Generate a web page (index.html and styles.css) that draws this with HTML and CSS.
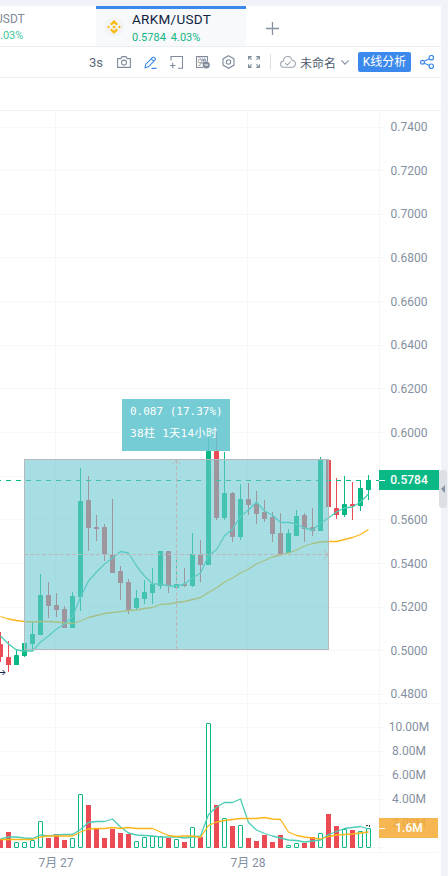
FILE: index.html
```html
<!DOCTYPE html>
<html lang="zh-CN">
<head>
    <meta charset="utf-8">
    <title>ARKM/USDT</title>
    <link rel="stylesheet" href="styles.css">
</head>
<body>
    <div class="app">
        <header class="tabs">
            <div class="tab tab-prev">
                <div class="pair">USDT</div>
                <div class="quote">.03%</div>
            </div>
            <div class="tab active">
                <span class="coin">
                    <svg width="14" height="14" viewBox="0 0 14 14" fill="#fbb80f">
                        <path d="M7 0l4 4-1.6 1.6L7 3.2 4.6 5.6 3 4zM7 14l4-4-1.6-1.6L7 10.800 4.600 8.400 3 10zM1.500 5.500L3 7 1.500 8.500 0 7zM12.500 5.500L14 7l-1.500 1.500L11 7zM7 5.300L8.700 7 7 8.700 5.300 7z"/>
                    </svg>
                </span>
                <div>
                    <div class="pair">ARKM/USDT</div>
                    <div class="quote"><span>0.5784</span><span>4.03%</span></div>
                </div>
            </div>
            <div class="add">
                <svg width="13" height="13" viewBox="0 0 13 13" stroke="#8591a3" stroke-width="1.3"><path d="M6.500 0v13M0 6.500h13"/></svg>
            </div>
        </header>

        <nav class="toolbar">
            <span class="period">3s</span>
            <svg class="ico camera" width="14" height="12" viewBox="0 0 14 12"><path d="M.6 2.600h3.200L5 .6h4l1.200 2h3.200v8.800H.6z"/><circle cx="7" cy="6.600" r="2.500"/></svg>
            <svg class="ico pen" width="13" height="13" viewBox="0 0 13 13"><path d="M1 11.800l.8-3.600L8.600 1.300q.8-.7 1.600 0l1 1q.7.8 0 1.600L4.400 10.800zM7.200 2.800l2.600 2.600M7.500 12.400h5"/></svg>
            <svg class="ico box" width="13" height="13" viewBox="0 0 13 13"><path d="M1 4.500v-4h11.500v11.700H8M0 9.500h5.500M2.700 6.700v5.500"/></svg>
            <svg class="ico pattern" width="14" height="13" viewBox="0 0 14 13"><path d="M7 11.500H.5V.5h11v5"/><text x="1.600" y="9" font-size="9">弹</text><circle cx="10.300" cy="9" r="3.500" fill="#7f8b9b" stroke="none"/><path d="M8.500 9h3.600" stroke="#fff"/></svg>
            <svg class="ico hex" width="13" height="14" viewBox="0 0 13 14"><path d="M6.500.7l5.500 3.200v6.200l-5.500 3.200L1 10.100V3.900z"/><circle cx="6.500" cy="7" r="2.200"/></svg>
            <svg class="ico full" width="12" height="12" viewBox="0 0 12 12"><path d="M.6 3.800V.6h3.200M.6.6l3 3M8.200.6h3.200v3.200M11.400.6l-3 3M.6 8.200v3.200h3.200M.6 11.400l3-3M11.400 8.200v3.200H8.200M11.400 11.400l-3-3"/></svg>
            <span class="sep"></span>
            <svg class="ico cloud" width="16" height="12" viewBox="0 0 16 12"><path d="M4 11.300C-.5 11.300-.4 5.200 3.500 5 4-.6 10.800-1 12 4.200c4.600.3 4.500 7.100-.2 7.100zM5.300 7.200l2 1.900 3.400-3.500"/></svg>
            <span class="name">未命名</span>
            <svg class="ico arrow" width="8" height="5" viewBox="0 0 8 5"><path d="M.4.4L4 4.200 7.600.4"/></svg>
            <button class="analyse">K线分析</button>
            <svg class="ico share" width="14" height="14" viewBox="0 0 14 14"><circle cx="2.500" cy="7.300" r="1.900"/><circle cx="11.300" cy="2.700" r="2.200"/><circle cx="11.300" cy="11.200" r="2.200"/><path d="M4.300 6.300l5-2.600M4.300 8.200l5 2.300"/></svg>
        </nav>

        <main class="chart">
            <svg id="plot" width="441" height="798" viewBox="0 78 441 798"></svg>
            <div class="tip">
                <div>0.087 (17.37%)</div>
                <div class="bars">38柱 1天14小时</div>
            </div>
        </main>
    </div>
    <div class="handle"></div>

    <script src="chart.js"></script>
</body>
</html>
```

FILE: styles.css
```css
body {
    margin: 0;
    background: #f1f3f8;
    font-family: Roboto, "Noto Sans CJK SC", sans-serif;
    height: 876px;
    overflow: hidden;
    position: relative;
}

.app {
    width: 441px;
    padding-top: 6px;
}

.tabs {
    display: flex;
    height: 40px;
    background: #fff;
    border-bottom: 1px solid #eceef2;
}

.tab {
    box-sizing: border-box;
    width: 150px;
    border-top: 3px solid #3b89ed;
    background: #f7f9fb;
    display: flex;
    padding-left: 8px;
}

.tab-prev {
    width: 96px;
    display: block;
    background: #fff;
    border-top-color: #fff;
    padding: 0;
}

.pair {
    font-size: 13.5px;
    line-height: 15px;
    margin-top: 3px;
    color: #10233f;
    letter-spacing: .3px;
}

.quote {
    font-size: 11px;
    line-height: 14px;
    margin-top: 4px;
    color: #10b583;
    display: flex;
    gap: 5px;
}

.tab-prev .pair {
    color: #7f8998;
    font-size: 12px;
    letter-spacing: 0;
    margin-left: -5px;
}

.tab-prev .quote {
    color: #3fc79c;
    margin-top: 2px;
}

.coin {
    width: 20px;
    height: 20px;
    margin: 8px 8px 0 0;
    border-radius: 50%;
    background: #f2f4f5;
    display: flex;
    align-items: center;
    justify-content: center;
}

.add {
    padding: 14px 0 0 20px;
}

.toolbar {
    box-sizing: border-box;
    height: 31px;
    background: #fff;
    border-bottom: 1px solid #eceef2;
    display: flex;
    align-items: center;
    padding-left: 89px;
}

.toolbar > * {
    flex: none;
}

.period {
    width: 28px;
    font-size: 13px;
    color: #5d697b;
}

.ico {
    fill: none;
    stroke: #7f8b9b;
    stroke-width: 1.1;
}

.ico text {
    fill: #7f8b9b;
    stroke: none;
}

.camera { margin-right: 13px; }
.pen { margin-right: 13px; stroke: #3b89ed; }
.box { margin-right: 13px; }
.pattern { margin-right: 12px; }
.hex { margin-right: 13px; }
.full { margin-right: 10px; }
.cloud { margin-right: 4px; stroke: #9aa4b1; }
.arrow { margin-right: 9px; stroke: #8591a3; }
.share { stroke: #3b89ed; stroke-width: 1.2; }

.sep {
    width: 1px;
    height: 16px;
    margin-right: 9px;
    background: #dcdfe5;
}

.name {
    width: 41px;
    font-size: 12px;
    color: #4c596c;
    white-space: nowrap;
}

.analyse {
    width: 53px;
    height: 20px;
    margin-right: 9px;
    padding: 0;
    border: none;
    border-radius: 2px;
    background: #3b89ed;
    color: #fff;
    font: 12px/20px Roboto, "Noto Sans CJK SC", sans-serif;
    white-space: nowrap;
}

.chart {
    height: 798px;
    background: #fff;
    position: relative;
}

.chart svg {
    display: block;
}

/* label of the measured range */
.tip {
    position: absolute;
    left: 122px;
    top: 321px;
    box-sizing: border-box;
    width: 108px;
    height: 52px;
    padding: 2px 0 0 8px;
    background: rgba(98, 197, 207, .88);
    color: #fff;
    font: 11px/22px "DejaVu Sans Mono", "Noto Sans CJK SC", monospace;
    white-space: nowrap;
}

.bars {
    letter-spacing: .35px;
}

.axis {
    font-size: 12px;
    fill: #8490a1;
}

.grid {
    stroke: #f7f7f8;
}

.frame {
    stroke: #eff0f3;
}

.up { fill: #0ab885; }
.down { fill: #ea4b55; }

.vol-up {
    fill: #fff;
    stroke: #0ab885;
}

.line {
    fill: none;
    stroke-width: 1.3;
    stroke-linejoin: round;
}

.fast { stroke: #4bcdb6; }
.slow { stroke: #fcb61a; }

.handle {
    position: absolute;
    left: 439px;
    top: 470px;
    width: 8px;
    height: 38px;
    border-radius: 3px;
    background: #dce0e5;
}

.handle::after {
    content: "";
    position: absolute;
    left: 2px;
    top: 15px;
    border: 4px solid transparent;
    border-left: 0;
    border-right-color: #8793a2;
}
```

FILE: chart.js
```js
const plot = document.getElementById('plot');

// high, body top, body bottom, low, volume top, 1 = up
const candles = [
    [632,644,657,662,839,0], [641,657,665,672,832,0], [649,655,665,665,842,1], [643,643,656,657,842,1],
    [621,634,644,651,840,1], [574,595,635,635,821,1], [582,595,606,618,838,0], [593,605,610,617,834,0],
    [606,609,628,628,840,0], [592,596,628,628,838,1], [468,501,597,611,794,1], [476,500,528,551,805,0],
    [515,527,529,541,829,0], [524,527,555,561,838,0], [499,555,573,573,829,0], [566,571,583,600,833,0],
    [579,582,610,614,834,0], [590,598,608,610,841,1], [580,592,599,604,837,1], [568,584,593,604,836,1],
    [551,551,586,589,836,1], [551,551,586,593,838,0], [559,584,588,588,839,1], [568,584,586,587,842,0],
    [533,554,586,587,827,1], [540,554,565,582,837,0], [438,451,565,565,723,1], [433,451,518,520,805,0],
    [452,493,518,520,818,1], [492,493,537,542,826,0], [484,499,537,540,825,1], [483,499,505,515,838,0],
    [491,504,514,524,841,0], [500,512,519,522,835,0], [512,517,534,542,842,0], [513,533,554,554,835,0],
    [529,533,553,553,845,1], [510,516,536,536,843,1], [513,515,529,542,843,0], [508,527,531,536,837,0],
    [457,460,531,531,833,1], [460,460,507,507,814,0], [478,508,515,519,826,0], [476,504,515,517,829,1],
    [482,504,506,520,830,0], [480,488,506,511,831,1], [475,480,490,500,828,1]
];

const maFast = [636,644,650,651,651,642,636,629,624,617,597,581,572,564,558,551.5,553,566,576,584,584,586,586,584,578,573,556,549.5,536,529,516.5,510,502,511,515,522.5,522.5,524,528,530,523,518,512,508,507,502,494];
const maSlow = [616.5,619,620.5,621.5,622,621.5,621.5,622,623,623.5,621,617.5,615.5,613.5,612.5,611.7,610.5,610,608.5,607.5,604.5,604,602.5,601.5,599.5,597.5,592.5,588,582,578,573,569,564,560.5,557,555,553,550,546,543.5,542,541.5,541.5,539.5,537.5,534.5,529.5];
const volFast = [839,837,837,838,838.5,835,836,835,834.5,834.5,829.5,822.5,821.5,821.5,819,827,833,835,835.5,836,837,837,837,838,837,836,814.5,807,802.5,802.5,799,822.5,830,833.5,836,838,840,840.5,842,841,840,834.5,831.5,828.5,827.5,826.5,829];
const volSlow = [839.5,839.5,839.5,839.5,839.5,837,836,836,836,836,832,829,828.5,828.5,827.5,828.5,827.5,828.5,828.5,828.5,832,835.5,836.5,836,836,837.5,825.5,822,820.5,819.5,818.5,818.5,818.5,817.5,819,819.5,832,835.5,837,838,839,836.5,835,834.5,834,833,832];

let out = '';

function rect(x, y, w, h, cls) {
    out += `<rect x="${x}" y="${y}" width="${w}" height="${h}" class="${cls}"/>`;
}

function line(values, cls) {
    const points = values.map((y, i) => `${i * 8 + 0.5},${y}`).join(' ');
    out += `<polyline class="line ${cls}" points="${points}"/>`;
}

function text(x, y, s, cls) {
    out += `<text x="${x}" y="${y}" text-anchor="middle" class="${cls}">${s}</text>`;
}

// grid
let grid = 'M55.5 112V852M247.5 112V852M379.5 112V852M0 703.5H438M0 852.5H438';
for (let i = 0; i < 14; i++) grid += `M0 ${Math.floor(127 + i * 43.65) + 0.5}H385`;
for (let i = 0; i < 6; i++) grid += `M0 ${727.5 + i * 24}H385`;
out += `<path class="grid" d="${grid}"/>`;
out += '<path class="frame" d="M0 110.5H441"/>';

// volume
candles.forEach((c, i) => {
    const x = i * 8 - 2;
    if (c[5]) out += `<rect x="${x + 0.5}" y="${c[4] + 0.5}" width="4" height="${847 - c[4]}" rx=".5" class="vol-up"/>`;
    else rect(x, c[4], 5, 848 - c[4], 'down');
});
line(volFast, 'fast');
line(volSlow, 'slow');

// price
candles.forEach((c, i) => {
    const cls = c[5] ? 'up' : 'down';
    rect(i * 8, c[0], 1, c[3] - c[0], cls);
    out += `<rect x="${i * 8 - 2}" y="${c[1]}" width="5" height="${c[2] - c[1]}" rx=".5" class="${cls}"/>`;
});
line(maSlow, 'slow');
line(maFast, 'fast');
out += '<path d="M-4 480.5H379" stroke="#0ab885" stroke-dasharray="5 5"/>';

// measured range
out += '<rect x="24.5" y="459.500" width="304" height="190" fill="#6ac8d1" fill-opacity=".6" stroke="#b5b9bb"/>';
out += '<path d="M24 554.5H328M176.500 650V460" stroke="#bcb8ba" stroke-dasharray="4 2" fill="none"/>';
out += '<path d="M324 550l4 4.500-4 4.500M172.500 464l4-4 4 4" stroke="#bcb8ba" fill="none"/>';
out += '<path d="M0 672.500h5M2.500 670l2.500 2.500-2.500 2.500" stroke="#15294a" fill="none"/>';
out += '<path d="M366 825.500h2M369.500 825v2" stroke="#444"/>';

// axis labels
for (let i = 0; i < 14; i++) {
    if (i !== 8) text(409, 131 + i * 43.65, (0.74 - i * 0.02).toFixed(4), 'axis');
}
['10.00M', '8.00M', '6.00M', '4.00M', '2.00M'].forEach((s, i) => text(409, 731 + i * 24, s, 'axis'));
text(56, 867, '7月 27', 'axis');
text(248, 867, '7月 28', 'axis');

// current values
out += '<rect x="379" y="470" width="60" height="20" fill="#0ab885"/><path d="M379 480.500h6" stroke="#fff"/>';
out += '<text x="409" y="484" text-anchor="middle" font-size="12" font-weight="500" fill="#fff">0.5784</text>';
out += '<rect x="379" y="818" width="59" height="20" fill="#f5ac38" fill-opacity=".87"/><path d="M379 828.500h6" stroke="#fff"/>';
out += '<text x="409" y="832" text-anchor="middle" font-size="12" font-weight="500" fill="#fff">1.6M</text>';

plot.innerHTML = out;
```
